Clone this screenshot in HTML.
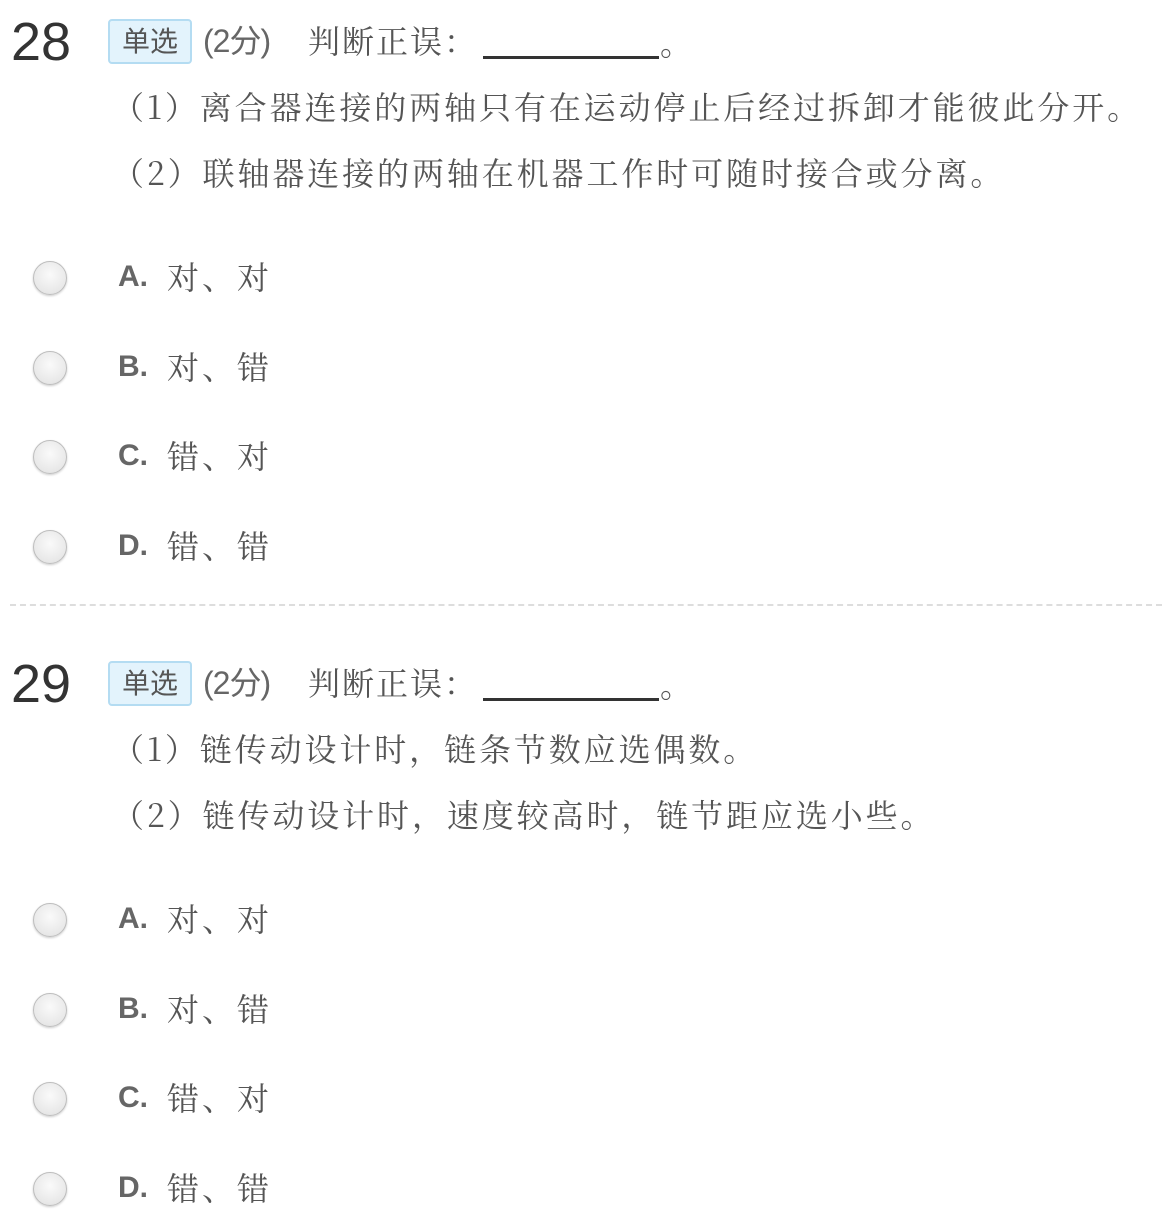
<!DOCTYPE html>
<html><head><meta charset="utf-8"><style>
html,body{margin:0;padding:0;background:#fff;width:1162px;height:1230px;overflow:hidden;position:relative}
.a{position:absolute;white-space:nowrap}
.num{font-family:"Liberation Sans",sans-serif;font-size:54px;color:#333;line-height:50px}
.badge{font-family:"Liberation Sans","Noto Sans CJK SC",sans-serif;font-size:28px;color:#555;background:#e3f3fc;border:2px solid #b4dcf2;border-radius:4px;width:80px;height:41px;line-height:41px;text-align:center}
.sc{font-family:"Liberation Sans","Noto Sans CJK SC",sans-serif;font-size:32px;color:#666;line-height:40px;letter-spacing:-1px}
.sf{font-family:"Liberation Serif","Noto Serif CJK SC",serif;font-size:32px;color:#555;line-height:40px;letter-spacing:2px}
.line{font-family:"Noto Serif CJK SC",serif;font-size:32px;color:#555;line-height:44px;letter-spacing:2.9px}
.blank{height:3px;background:#333;width:176px}
.radio{width:32px;height:32px;border-radius:50%;border:1px solid #bdbdbd;background:radial-gradient(circle at 50% 40%,#fafafa 0,#e8e8e8 70%,#d6d6d6 100%);box-shadow:0 1px 2px rgba(0,0,0,.2)}
.opt{font-family:"Liberation Sans",sans-serif;font-weight:bold;font-size:30px;color:#666;line-height:40px}
.ot{font-family:"Noto Serif CJK SC",serif;font-size:32px;color:#555;line-height:40px;letter-spacing:3px}
.dash{left:10px;width:1152px;height:0;border-top:2px dashed #ddd}
</style></head><body>

<div class="a num" style="left:11px;top:17px">28</div>
<div class="a badge" style="left:108px;top:19px">单选</div>
<div class="a sc" style="left:203px;top:21px">(2分)</div>
<div class="a sf" style="left:308px;top:22px">判断正误：</div>
<div class="a blank" style="left:483px;top:56px"></div>
<div class="a sf" style="left:660px;top:24px">。</div>
<div class="a line" style="left:112px;top:84px">（1）离合器连接的两轴只有在运动停止后经过拆卸才能彼此分开。</div>
<div class="a line" style="left:112px;top:150px">（2）联轴器连接的两轴在机器工作时可随时接合或分离。</div>

<div class="a radio" style="left:33px;top:261px"></div><div class="a opt" style="left:118px;top:257px">A.</div><div class="a ot" style="left:167px;top:256px">对、对</div>
<div class="a radio" style="left:33px;top:351px"></div><div class="a opt" style="left:118px;top:347px">B.</div><div class="a ot" style="left:167px;top:346px">对、错</div>
<div class="a radio" style="left:33px;top:440px"></div><div class="a opt" style="left:118px;top:436px">C.</div><div class="a ot" style="left:167px;top:435px">错、对</div>
<div class="a radio" style="left:33px;top:530px"></div><div class="a opt" style="left:118px;top:526px">D.</div><div class="a ot" style="left:167px;top:525px">错、错</div>

<div class="a dash" style="top:604px"></div>

<div class="a num" style="left:11px;top:659px">29</div>
<div class="a badge" style="left:108px;top:661px">单选</div>
<div class="a sc" style="left:203px;top:663px">(2分)</div>
<div class="a sf" style="left:308px;top:664px">判断正误：</div>
<div class="a blank" style="left:483px;top:698px"></div>
<div class="a sf" style="left:660px;top:666px">。</div>
<div class="a line" style="left:112px;top:726px">（1）链传动设计时，链条节数应选偶数。</div>
<div class="a line" style="left:112px;top:792px">（2）链传动设计时，速度较高时，链节距应选小些。</div>

<div class="a radio" style="left:33px;top:903px"></div><div class="a opt" style="left:118px;top:899px">A.</div><div class="a ot" style="left:167px;top:898px">对、对</div>
<div class="a radio" style="left:33px;top:993px"></div><div class="a opt" style="left:118px;top:989px">B.</div><div class="a ot" style="left:167px;top:988px">对、错</div>
<div class="a radio" style="left:33px;top:1082px"></div><div class="a opt" style="left:118px;top:1078px">C.</div><div class="a ot" style="left:167px;top:1077px">错、对</div>
<div class="a radio" style="left:33px;top:1172px"></div><div class="a opt" style="left:118px;top:1168px">D.</div><div class="a ot" style="left:167px;top:1167px">错、错</div>

</body></html>
